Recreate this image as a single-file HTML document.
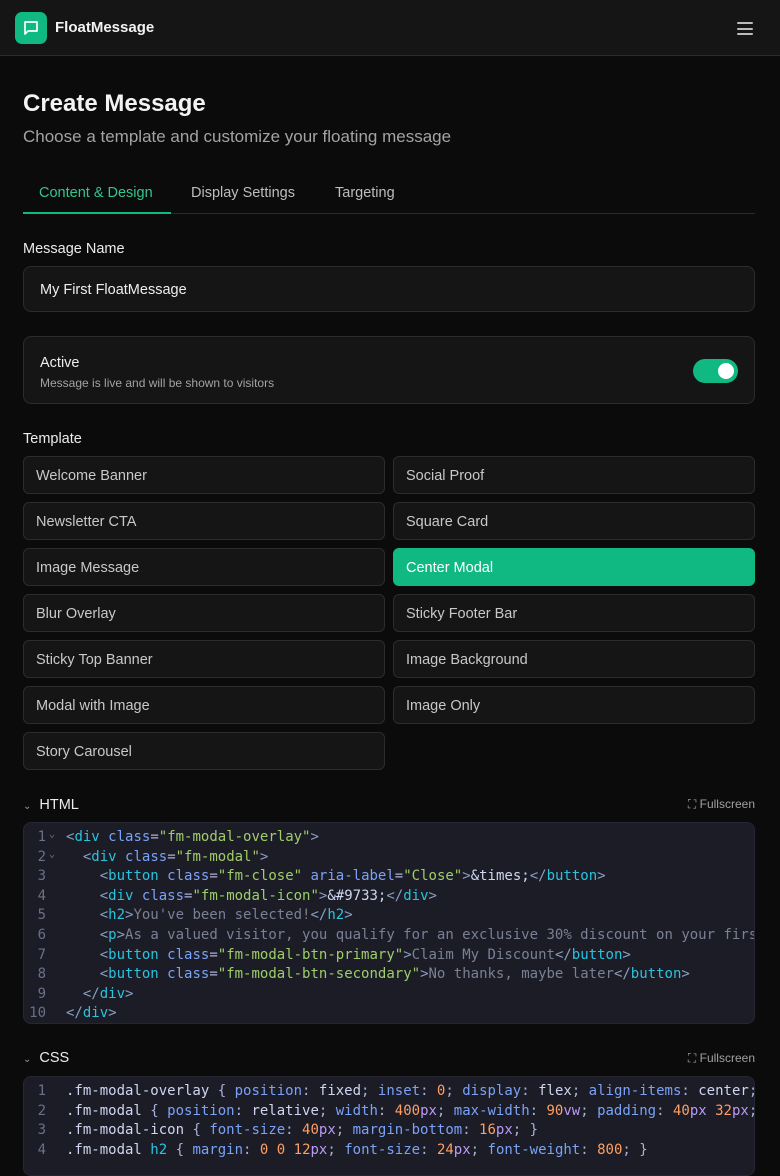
<!DOCTYPE html>
<html><head><meta charset="utf-8"><style>
*{box-sizing:border-box;margin:0;padding:0}
body{width:780px;height:1160px;overflow:hidden;background:#0b0b0b;font-family:"Liberation Sans",sans-serif;color:#e8e8e8}
.hdr{height:56px;background:#151515;border-bottom:1px solid #2a2a2a;display:flex;align-items:center;padding:0 15px;position:relative}
.logo{width:32px;height:32px;border-radius:7px;background:#10b981;display:flex;align-items:center;justify-content:center}
.brand{margin-left:8px;font-weight:bold;font-size:15px;color:#f2f2f2}
.menu{position:absolute;right:27px;top:22px;width:16px}
.menu i{display:block;height:2px;background:#bbb;margin-bottom:3.5px;border-radius:1px}
h1{position:absolute;top:90px;left:23px;font-size:24px;font-weight:bold;color:#f3f3f3}
.sub{position:absolute;top:127px;left:23px;font-size:17px;color:#a3a3a3}
.tabs{position:absolute;top:182px;left:23px;width:732px;height:32px;border-bottom:1px solid #2a2a2a;font-size:14.5px;color:#bdbdbd}
.tabs span{position:absolute;top:3px}
.tabs .act{color:#34c58f}
.uline{position:absolute;left:0;bottom:-1px;width:148px;height:2px;background:#10b981}
.lbl{position:absolute;left:23px;font-size:14.5px;color:#ececec}
.input{position:absolute;left:23px;width:732px;top:266px;height:46px;border:1px solid #2c2c2c;border-radius:8px;background:#151515;font-size:14.5px;padding:15px 16px;color:#eee}
.card{position:absolute;left:23px;width:732px;top:336px;height:68px;border:1px solid #2c2c2c;border-radius:8px;background:#151515}
.tog{position:absolute;right:16px;top:22px;width:45px;height:24px;border-radius:12px;background:#10b981}
.tog:after{content:"";position:absolute;right:4px;top:4px;width:16px;height:16px;border-radius:50%;background:#fff}
.tb{position:absolute;width:362px;height:38px;border:1px solid #2c2c2c;border-radius:6px;background:#151515;font-size:14.5px;color:#c8c8c8;padding:11px 12px}
.tb.on{background:#10b981;border-color:#10b981;color:#fff}
.sec{position:absolute;left:23px;font-size:14.5px;color:#ececec}
.fs{position:absolute;right:25px;font-size:12px;color:#a0a0a0}
.code{position:absolute;left:23px;width:732px;background:#1b1c26;border:1px solid #262733;border-radius:8px;overflow:hidden;font-family:"DejaVu Sans Mono",monospace;font-size:14px;line-height:19.6px;padding-top:5px;white-space:pre;color:#a9b1d6}
.ln{display:inline-block;width:22px;text-align:right;color:#6b7089;margin-right:20px;position:relative}
.f:after{content:"\2304";position:absolute;left:25px;top:-3px;font-size:10px;color:#6b7089}
.b{color:#89a0c0}.t{color:#2ac3de}.a{color:#7aa2f7}.s{color:#9ece6a}.n{color:#ff9e64}.u{color:#bb9af7}.p{color:#7a8095}.x{color:#d0d6f0}
</style></head><body>
<div class="hdr"><div class="logo"><svg width="18" height="18" viewBox="0 0 24 24" fill="none" stroke="#fff" stroke-width="2.2" stroke-linejoin="round"><path d="M4 4h16v12H8l-4 4z"/></svg></div><div class="brand">FloatMessage</div>
<div class="menu"><i></i><i></i><i></i></div></div>
<h1>Create Message</h1>
<div class="sub">Choose a template and customize your floating message</div>
<div class="tabs"><span class="act" style="left:16px">Content &amp; Design</span><span style="left:168px">Display Settings</span><span style="left:312px">Targeting</span><div class="uline"></div></div>
<div class="lbl" style="top:241px">Message Name</div>
<div class="input">My First FloatMessage</div>
<div class="card"><div style="position:absolute;left:16px;top:18px;font-size:14.5px;color:#eee">Active</div><div style="position:absolute;left:16px;top:39px;font-size:12px;color:#a3a3a3">Message is live and will be shown to visitors</div><div class="tog"></div></div>
<div class="lbl" style="top:431px">Template</div>
<div class="tb" style="left:23px;top:456px">Welcome Banner</div><div class="tb" style="left:393px;top:456px">Social Proof</div>
<div class="tb" style="left:23px;top:502px">Newsletter CTA</div><div class="tb" style="left:393px;top:502px">Square Card</div>
<div class="tb" style="left:23px;top:548px">Image Message</div><div class="tb on" style="left:393px;top:548px">Center Modal</div>
<div class="tb" style="left:23px;top:594px">Blur Overlay</div><div class="tb" style="left:393px;top:594px">Sticky Footer Bar</div>
<div class="tb" style="left:23px;top:640px">Sticky Top Banner</div><div class="tb" style="left:393px;top:640px">Image Background</div>
<div class="tb" style="left:23px;top:686px">Modal with Image</div><div class="tb" style="left:393px;top:686px">Image Only</div>
<div class="tb" style="left:23px;top:732px">Story Carousel</div>
<div class="sec" style="top:797px"><span style="font-size:10px;color:#999;margin-right:8px">&#8964;</span>HTML</div>
<div class="fs" style="top:797px">&#9974; Fullscreen</div>
<div class="code" style="top:822px;height:202px"><span class="ln f">1</span><span class="b">&lt;</span><span class="t">div</span> <span class="a">class</span>=<span class="s">"fm-modal-overlay"</span><span class="b">&gt;</span>
<span class="ln f">2</span>  <span class="b">&lt;</span><span class="t">div</span> <span class="a">class</span>=<span class="s">"fm-modal"</span><span class="b">&gt;</span>
<span class="ln">3</span>    <span class="b">&lt;</span><span class="t">button</span> <span class="a">class</span>=<span class="s">"fm-close"</span> <span class="a">aria-label</span>=<span class="s">"Close"</span><span class="b">&gt;</span><span class="x">&amp;times;</span><span class="b">&lt;/</span><span class="t">button</span><span class="b">&gt;</span>
<span class="ln">4</span>    <span class="b">&lt;</span><span class="t">div</span> <span class="a">class</span>=<span class="s">"fm-modal-icon"</span><span class="b">&gt;</span><span class="x">&amp;#9733;</span><span class="b">&lt;/</span><span class="t">div</span><span class="b">&gt;</span>
<span class="ln">5</span>    <span class="b">&lt;</span><span class="t">h2</span><span class="b">&gt;</span><span class="p">You've been selected!</span><span class="b">&lt;/</span><span class="t">h2</span><span class="b">&gt;</span>
<span class="ln">6</span>    <span class="b">&lt;</span><span class="t">p</span><span class="b">&gt;</span><span class="p">As a valued visitor, you qualify for an exclusive 30% discount on your first</span>
<span class="ln">7</span>    <span class="b">&lt;</span><span class="t">button</span> <span class="a">class</span>=<span class="s">"fm-modal-btn-primary"</span><span class="b">&gt;</span><span class="p">Claim My Discount</span><span class="b">&lt;/</span><span class="t">button</span><span class="b">&gt;</span>
<span class="ln">8</span>    <span class="b">&lt;</span><span class="t">button</span> <span class="a">class</span>=<span class="s">"fm-modal-btn-secondary"</span><span class="b">&gt;</span><span class="p">No thanks, maybe later</span><span class="b">&lt;/</span><span class="t">button</span><span class="b">&gt;</span>
<span class="ln">9</span>  <span class="b">&lt;/</span><span class="t">div</span><span class="b">&gt;</span>
<span class="ln">10</span><span class="b">&lt;/</span><span class="t">div</span><span class="b">&gt;</span></div>
<div class="sec" style="top:1050px"><span style="font-size:10px;color:#999;margin-right:8px">&#8964;</span>CSS</div>
<div class="fs" style="top:1051px">&#9974; Fullscreen</div>
<div class="code" style="top:1076px;height:100px"><span class="ln">1</span><span class="x">.fm-modal-overlay</span> { <span class="a">position</span>: <span class="x">fixed</span>; <span class="a">inset</span>: <span class="n">0</span>; <span class="a">display</span>: <span class="x">flex</span>; <span class="a">align-items</span>: <span class="x">center</span>;
<span class="ln">2</span><span class="x">.fm-modal</span> { <span class="a">position</span>: <span class="x">relative</span>; <span class="a">width</span>: <span class="n">400</span><span class="u">px</span>; <span class="a">max-width</span>: <span class="n">90</span><span class="u">vw</span>; <span class="a">padding</span>: <span class="n">40</span><span class="u">px</span> <span class="n">32</span><span class="u">px</span>;
<span class="ln">3</span><span class="x">.fm-modal-icon</span> { <span class="a">font-size</span>: <span class="n">40</span><span class="u">px</span>; <span class="a">margin-bottom</span>: <span class="n">16</span><span class="u">px</span>; }
<span class="ln">4</span><span class="x">.fm-modal</span> <span class="t">h2</span> { <span class="a">margin</span>: <span class="n">0</span> <span class="n">0</span> <span class="n">12</span><span class="u">px</span>; <span class="a">font-size</span>: <span class="n">24</span><span class="u">px</span>; <span class="a">font-weight</span>: <span class="n">800</span>; }</div>
</body></html>
